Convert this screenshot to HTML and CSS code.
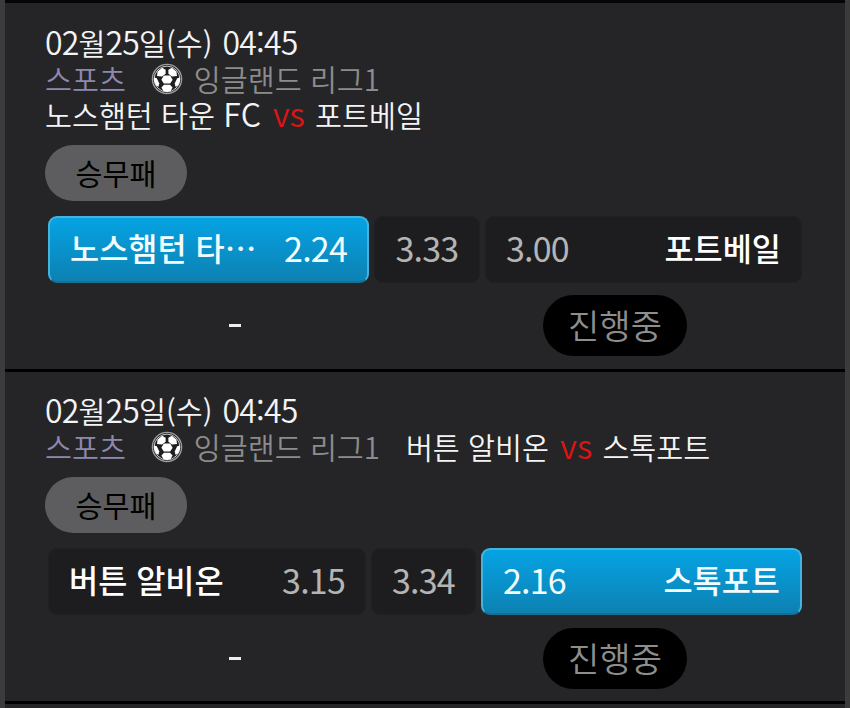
FILE: index.html
```
<!DOCTYPE html>
<html lang="ko">
<head>
    <meta charset="UTF-8">
    <meta name="viewport" content="width=device-width, initial-scale=1.0">
    <title>배팅내역</title>
    <link rel="stylesheet" href="styles.css">
</head>
<body>
    <!-- 축구공 아이콘 -->
    <svg class="sprite" width="0" height="0">
        <symbol id="ball" viewBox="0 0 32 32">
            <circle cx="16" cy="16" r="14.6" fill="#1e1e20" stroke="#9c9c9c" stroke-width="1.4"/>
            <circle cx="16" cy="16" r="12.9" fill="none" stroke="#dcdcdc" stroke-width="0.9"/>
            <g fill="#fff">
                <path d="M12.8 12.6 H19.2 L21.6 16.8 L19.2 20.6 H12.8 L10.4 16.8z"/>
                <path d="M6.6 8.6 L11.2 4.8 L14.6 6.8 V10.8 L11 13.6 L6 13z"/>
                <path d="M25.4 8.6 L20.8 4.8 L17.4 6.8 V10.8 L21 13.6 L26 13z"/>
                <path d="M3 14.4 L5.8 15.2 L8.2 20.2 L7.6 23.8 L5 22.4 L3 18z"/>
                <path d="M29 14.4 L26.2 15.2 L23.8 20.2 L24.4 23.8 L27 22.4 L29 18z"/>
                <path d="M13 21.8 H19 L21.6 24.6 L19.6 28 L16 29 L12.4 28 L10.4 24.6z"/>
            </g>
        </symbol>
    </svg>
    <main class="bet-list">
        <section class="match">
            <div class="date"><span class="num">02</span>월<span class="num">25</span>일(수) <span class="num">04:45</span></div>
            <div class="info">
                <div class="league">
                    <span class="sports">스포츠</span>
                    <svg class="ball"><use href="#ball"/></svg>
                    <span>잉글랜드 리그1</span>
                </div>
                <div class="teams">노스햄턴 타운 <span class="fc">FC</span> <span class="vs">vs</span> 포트베일</div>
            </div>
            <div class="type">승무패</div>
            <div class="odds">
                <div class="odd home selected"><b>노스햄턴 타…</b><span>2.24</span></div>
                <div class="odd draw"><span>3.33</span></div>
                <div class="odd away"><span>3.00</span><b>포트베일</b></div>
            </div>
            <div class="result">
                <div class="score"><span class="dash"></span></div>
                <div class="state">진행중</div>
            </div>
        </section>

        <section class="match second">
            <div class="date"><span class="num">02</span>월<span class="num">25</span>일(수) <span class="num">04:45</span></div>
            <div class="info">
                <div class="league">
                    <span class="sports">스포츠</span>
                    <svg class="ball"><use href="#ball"/></svg>
                    <span>잉글랜드 리그1</span>
                </div>
                <div class="teams">버튼 알비온 <span class="vs">vs</span> 스톡포트</div>
            </div>
            <div class="type">승무패</div>
            <div class="odds">
                <div class="odd home"><b>버튼 알비온</b><span>3.15</span></div>
                <div class="odd draw"><span>3.34</span></div>
                <div class="odd away selected"><span>2.16</span><b>스톡포트</b></div>
            </div>
            <div class="result">
                <div class="score"><span class="dash"></span></div>
                <div class="state">진행중</div>
            </div>
        </section>
    </main>
</body>
</html>
```

FILE: styles.css
```
* {
    box-sizing: border-box;
}

body {
    margin: 0;
    height: 708px;
    overflow: hidden;
    background-color: #3b3b3c;
    font-family: "Noto Sans CJK KR", sans-serif;
    font-weight: 350;
    font-size: 29.3px;
    line-height: 36px;
    color: #f4f4f4;
}

.sprite {
    display: block;
}

.bet-list {
    height: 708px;
    margin: 0 5px;
    background-color: #252527;
    border-top: 3px solid #050505;
}

.match {
    height: 369px;
    padding: 21px 43px 0 40px;
    border-bottom: 3px solid #000;
}

.match.second {
    height: 332px;
    padding-top: 20px;
}

.date {
    height: 36px;
    white-space: nowrap;
    word-spacing: 2px;
}

.num {
    font-size: 32px;
    line-height: 1px;
    letter-spacing: -0.8px;
}

.info {
    display: flex;
    flex-wrap: wrap;
    column-gap: 26px;
    padding-right: 50px;
}

.league {
    display: flex;
    align-items: center;
    height: 36px;
    color: #8c8c8c;
    white-space: nowrap;
}

.sports {
    color: #8f88ae;
}

.ball {
    width: 32px;
    height: 32px;
    margin: 1px 11px 0 25px;
}

.teams {
    height: 36px;
    white-space: nowrap;
}

.fc {
    font-size: 32px;
    line-height: 1px;
    letter-spacing: 0.5px;
}

.vs {
    margin: 0 2px 0 3px;
    color: #dc1414;
    font-size: 33px;
    line-height: 1px;
}

.type {
    width: 142px;
    height: 56px;
    margin-top: 13px;
    border-radius: 28px;
    background-color: #5d5d5f;
    color: #000;
    font-weight: 400;
    line-height: 54px;
    text-align: center;
}

.odds {
    display: flex;
    gap: 5px;
    height: 67px;
    margin: 15px 0 0 3px;
}

.odd {
    display: flex;
    justify-content: space-between;
    padding: 0 20px;
    border: 1px solid #202022;
    border-radius: 9px;
    background-color: #1d1d1f;
    color: #b4b4b4;
    font-size: 34px;
    font-weight: 400;
    line-height: 61px;
    letter-spacing: -0.8px;
    white-space: nowrap;
}

.odd b {
    color: #fff;
    font-size: 31.7px;
    font-weight: 500;
    letter-spacing: 0;
}

.home {
    width: 321px;
}

.draw {
    width: 106px;
    justify-content: center;
}

.away {
    flex: 1;
}

.selected {
    border: 2px solid #43b4dc;
    border-bottom-color: #176f94;
    background: linear-gradient(#05a3e4, #0d81b2);
    color: #f2fcff;
    line-height: 59px;
}

.selected b {
    color: #f2fcff;
}

.second .home {
    width: 318px;
}

.second .draw {
    width: 105px;
}

.result {
    display: grid;
    grid-template-columns: 374px 1fr;
    justify-items: center;
    align-items: center;
    margin-top: 12px;
    padding-left: 3px;
}

.second .result {
    margin-top: 13px;
}

.dash {
    display: block;
    width: 12px;
    height: 3px;
    background-color: #eee;
}

.state {
    width: 144px;
    height: 61px;
    margin-left: 6px;
    border-radius: 31px;
    background-color: #000;
    color: #8e8e8e;
    font-size: 34px;
    line-height: 60px;
    text-align: center;
}
```
